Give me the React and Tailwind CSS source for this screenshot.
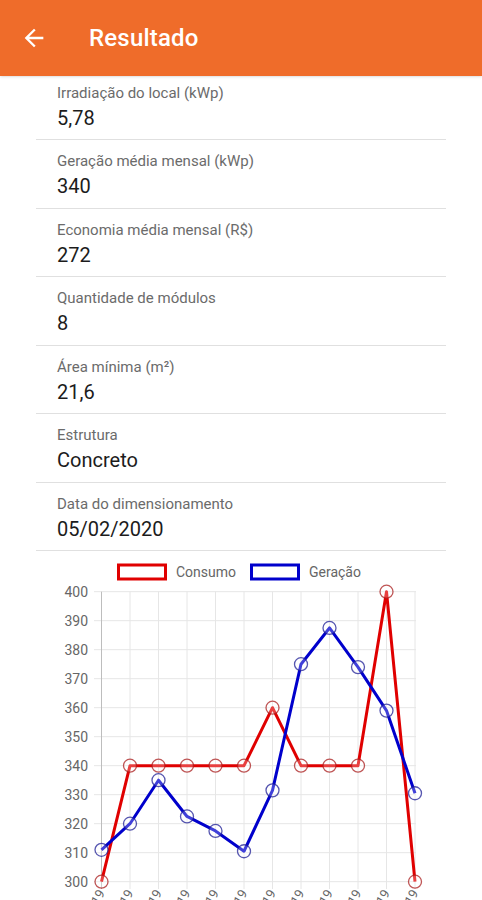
import React from 'react';

const items = [
  { label: 'Irradiação do local (kWp)', value: '5,78' },
  { label: 'Geração média mensal (kWp)', value: '340' },
  { label: 'Economia média mensal (R$)', value: '272' },
  { label: 'Quantidade de módulos', value: '8' },
  { label: 'Área mínima (m²)', value: '21,6' },
  { label: 'Estrutura', value: 'Concreto' },
  { label: 'Data do dimensionamento', value: '05/02/2020' },
];

const consumo = [300, 340, 340, 340, 340, 340, 360, 340, 340, 340, 400, 300];
const geracao = [311, 320, 335, 322.5, 317.5, 310.5, 331.5, 375, 387.5, 374, 359, 330.5];
const months = ['jan/19', 'fev/19', 'mar/19', 'abr/19', 'mai/19', 'jun/19', 'jul/19', 'ago/19', 'set/19', 'out/19', 'nov/19', 'dez/19'];

const px = (i) => 101.5 + i * 28.5;
const py = (v) => 881.7 - (v - 300) * 2.9;

const Chart = () => {
  const ticks = [400, 390, 380, 370, 360, 350, 340, 330, 320, 310, 300];
  const line = (data) => data.map((v, i) => `${px(i)},${py(v)}`).join(' ');

  return (
    <svg width="482" height="360" className="block" style={{ fontFamily: 'Roboto, "Liberation Sans", sans-serif' }}>
      <g transform="translate(0,-551)">
        {/* legend */}
        <rect x="118.5" y="565" width="47" height="14" fill="none" stroke="#e00000" strokeWidth="3" />
        <text x="176" y="577" fontSize="14" fill="#666">Consumo</text>
        <rect x="251.5" y="565" width="47" height="14" fill="none" stroke="#0000cc" strokeWidth="3" />
        <text x="309" y="577" fontSize="14" fill="#666">Geração</text>

        {/* grid */}
        {ticks.map((t) => (
          <g key={t}>
            <line x1="94" x2="416" y1={py(t)} y2={py(t)} stroke="#e6e6e6" strokeWidth="1" />
            <text x="88" y={py(t) + 5} fontSize="14" fill="#666" textAnchor="end">{t}</text>
          </g>
        ))}
        {months.map((m, i) => (
          <g key={m}>
            <line x1={px(i)} x2={px(i)} y1="591.7" y2="889" stroke={i === 0 ? '#bdbdbd' : '#e6e6e6'} strokeWidth="1" />
            <text
              x={px(i) + 4}
              y="893"
              fontSize="13"
              fill="#666"
              textAnchor="end"
              transform={`rotate(-60 ${px(i) + 4} 893)`}
            >
              {m}
            </text>
          </g>
        ))}

        {/* series */}
        <polyline points={line(consumo)} fill="none" stroke="#e00000" strokeWidth="3" strokeLinejoin="round" />
        <polyline points={line(geracao)} fill="none" stroke="#0000cc" strokeWidth="3" strokeLinejoin="round" />
        {consumo.map((v, i) => (
          <circle key={'c' + i} cx={px(i)} cy={py(v)} r="6.5" fill="rgba(255,255,255,0.25)" stroke="rgba(170,30,30,0.75)" strokeWidth="1.3" />
        ))}
        {geracao.map((v, i) => (
          <circle key={'g' + i} cx={px(i)} cy={py(v)} r="6.5" fill="rgba(255,255,255,0.25)" stroke="rgba(30,30,150,0.75)" strokeWidth="1.3" />
        ))}
      </g>
    </svg>
  );
};

export default function App() {
  return (
    <div className="h-[900px] overflow-hidden bg-white" style={{ fontFamily: 'Roboto, "Liberation Sans", sans-serif' }}>
      <header className="h-[76px] bg-[#ef6c2a] flex items-center shadow-sm">
        <svg width="28" height="28" viewBox="0 0 24 24" className="ml-[20px]" fill="#fff">
          <path d="M20 11H7.83l5.59-5.59L12 4l-8 8 8 8 1.41-1.41L7.83 13H20v-2z" />
        </svg>
        <h1 className="ml-[41px] text-[24px] font-medium text-white tracking-[0.2px]">Resultado</h1>
      </header>

      <div className="px-[36px]">
        {items.map((it, i) => (
          <div
            key={it.label}
            className={`border-b border-[#e0e0e0] pl-[21px] pb-[6.5px] ${i === 0 ? 'pt-[6.5px]' : 'pt-[11px]'}`}
          >
            <div className="text-[15px] leading-[21px] text-[#6b6b6b]">{it.label}</div>
            <div className="text-[20px] leading-[29px] text-[#1c1c1c]">{it.value}</div>
          </div>
        ))}
      </div>

      <Chart />
    </div>
  );
}
